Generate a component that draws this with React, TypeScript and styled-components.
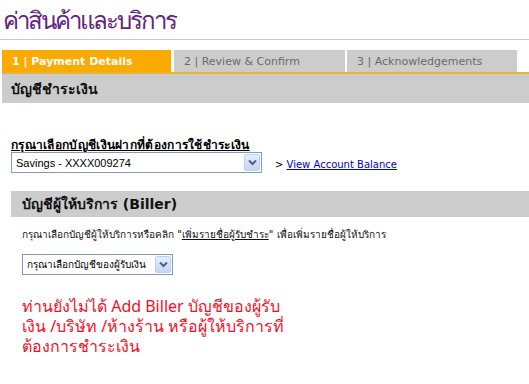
import React from "react";
import styled, { createGlobalStyle } from "styled-components";

const Global = createGlobalStyle`
  html, body { margin: 0; padding: 0; background: #fff; }
  body { font-family: "DejaVu Sans", "Noto Sans", sans-serif; color: #000; }
`;

const Page = styled.div`
  width: 529px;
  height: 384px;
  overflow: hidden;
  display: flex;
  flex-direction: column;
`;

const TitleBar = styled.div`
  height: 39px;
  border-bottom: 1px solid #c8c8c8;
  display: flex;
  align-items: center;
  padding-left: 3px;
`;

const Title = styled.h1`
  margin: 0;
  font-family: "Noto Sans", "Liberation Sans", sans-serif;
  font-size: 24px;
  font-weight: 500;
  color: #63237f;
  letter-spacing: -2px;
  line-height: 1;
`;

const Tabs = styled.div`
  margin: 10px 0 0 2px;
  display: flex;
  height: 22px;
`;

const Tab = styled.div<{ $active?: boolean; $w: number; $gap: number }>`
  width: ${(p) => p.$w}px;
  margin-right: ${(p) => p.$gap}px;
  background: ${(p) => (p.$active ? "#fbaa00" : "#cccccc")};
  color: ${(p) => (p.$active ? "#ffffff" : "#6a6a6a")};
  font-weight: ${(p) => (p.$active ? 700 : 400)};
  font-size: 11px;
  display: flex;
  align-items: center;
  padding-left: 10px;
  box-sizing: border-box;
  white-space: nowrap;
`;

const TabLine = styled.div`
  margin-left: 2px;
  height: 2px;
  background: #e6b23a;
`;

const SectionBar = styled.div<{ $inset: number; $h: number; $pad: number }>`
  margin-left: ${(p) => p.$inset}px;
  height: ${(p) => p.$h}px;
  background: #cccccc;
  display: flex;
  align-items: center;
  padding-left: ${(p) => p.$pad}px;
  font-family: "DejaVu Sans", "Noto Sans", sans-serif;
  font-weight: 700;
  color: #111;
`;

const SectionText = styled.span<{ $size: number }>`
  font-size: ${(p) => p.$size}px;
`;

const Content = styled.div<{ $left: number; $top: number }>`
  padding-left: ${(p) => p.$left}px;
  padding-top: ${(p) => p.$top}px;
  display: flex;
  flex-direction: column;
`;

const FieldLabel = styled.div`
  font-size: 12px;
  font-weight: 700;
  line-height: 13px;
  height: 13px;
  letter-spacing: 0.3px;
  text-decoration: underline;
  white-space: nowrap;
`;

const Row = styled.div`
  display: flex;
  align-items: flex-end;
  gap: 13px;
`;

const SelectBox = styled.div<{ $w: number }>`
  width: ${(p) => p.$w}px;
  height: 21px;
  box-sizing: border-box;
  border: 1px solid #7f9db9;
  background: #fff;
  display: flex;
  align-items: center;
  justify-content: space-between;
  padding: 0 1px 0 4px;
`;

const SelectText = styled.span<{ $size: number; $font: string }>`
  font-family: ${(p) => p.$font};
  font-size: ${(p) => p.$size}px;
  color: #000;
  white-space: nowrap;
`;

const DropButton = styled.span`
  width: 16px;
  height: 17px;
  box-sizing: border-box;
  border: 1px solid #bad1f7;
  border-radius: 2px;
  background: linear-gradient(#e6eefc, #c5d5f5);
  display: flex;
  align-items: center;
  justify-content: center;
`;

const LinkWrap = styled.span`
  font-size: 10px;
  color: #000;
  padding-bottom: 3px;
  white-space: nowrap;
`;

const Link = styled.a`
  color: #0000cc;
  text-decoration: underline;
  cursor: pointer;
`;

const Instruction = styled.div`
  font-size: 10px;
  line-height: 14px;
  color: #111;
  white-space: nowrap;
  margin-bottom: 12px;
`;

const InlineLink = styled.span`
  text-decoration: underline;
`;

const Warning = styled.div`
  margin-top: 21px;
  font-family: "Noto Sans", "Liberation Sans", sans-serif;
  font-size: 16px;
  line-height: 20px;
  color: #f20f1f;
`;

const Chevron = () => (
  <svg width="9" height="7" viewBox="0 0 9 7">
    <path d="M1 1.5 L4.5 5 L8 1.5" fill="none" stroke="#4d6185" strokeWidth="2" />
  </svg>
);

export default function App() {
  return (
    <Page>
      <Global />
      <TitleBar>
        <Title>ค่าสินค้าและบริการ</Title>
      </TitleBar>
      <Tabs>
        <Tab $active $w={169} $gap={3}>1 | Payment Details</Tab>
        <Tab $w={171} $gap={2}>2 | Review &amp; Confirm</Tab>
        <Tab $w={170} $gap={0}>3 | Acknowledgements</Tab>
      </Tabs>
      <TabLine />
      <SectionBar $inset={2} $h={29} $pad={9}>
        <SectionText $size={14}>บัญชีชำระเงิน</SectionText>
      </SectionBar>
      <Content $left={11} $top={36}>
        <FieldLabel>กรุณาเลือกบัญชีเงินฝากที่ต้องการใช้ชำระเงิน</FieldLabel>
        <Row>
          <SelectBox $w={251}>
            <SelectText $size={11} $font={'"Liberation Sans", Arial, sans-serif'}>Savings - XXXX009274</SelectText>
            <DropButton><Chevron /></DropButton>
          </SelectBox>
          <LinkWrap>
            &gt; <Link>View Account Balance</Link>
          </LinkWrap>
        </Row>
      </Content>
      <Content $left={11} $top={18}>
        <SectionBar $inset={0} $h={26} $pad={11}>
          <SectionText $size={14}>บัญชีผู้ให้บริการ (Biller)</SectionText>
        </SectionBar>
      </Content>
      <Content $left={22} $top={11}>
        <Instruction>
          กรุณาเลือกบัญชีผู้ให้บริการหรือคลิก "<InlineLink>เพิ่มรายชื่อผู้รับชำระ</InlineLink>" เพื่อเพิ่มรายชื่อผู้ให้บริการ
        </Instruction>
        <SelectBox $w={151}>
          <SelectText $size={10} $font={'"DejaVu Sans", sans-serif'}>กรุณาเลือกบัญชีของผู้รับเงิน</SelectText>
          <DropButton><Chevron /></DropButton>
        </SelectBox>
        <Warning>
          ท่านยังไม่ได้ Add Biller บัญชีของผู้รับ
          <br />
          เงิน /บริษัท /ห้างร้าน หรือผู้ให้บริการที่
          <br />
          ต้องการชำระเงิน
        </Warning>
      </Content>
    </Page>
  );
}
